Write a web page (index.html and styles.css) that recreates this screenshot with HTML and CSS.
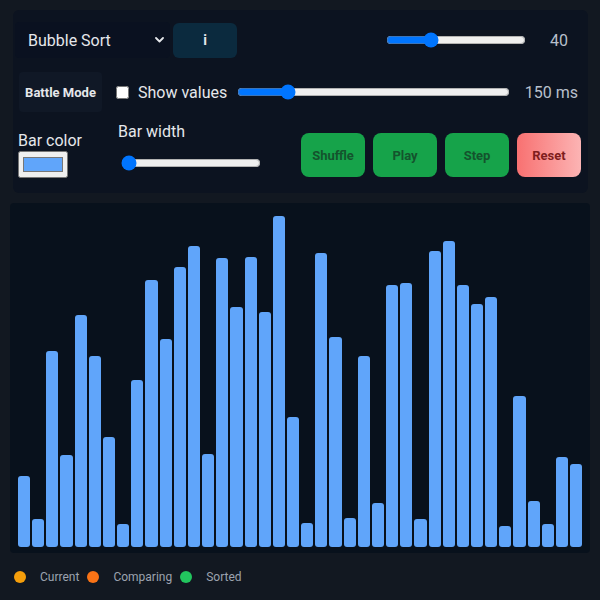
FILE: index.html
```html
<!DOCTYPE html>
<html>
<head>
<meta charset="utf-8">
<link rel="stylesheet" href="styles.css">
</head>
<body>
<div class="app">
  <div class="panel">
    <div class="row row1">
      <div class="select-wrap">
        <select class="algo"><option>Bubble Sort</option><option>Insertion Sort</option></select>
        <svg class="chev" width="9" height="6" viewBox="0 0 9 6"><path d="M1 1 L4.5 4.5 L8 1" fill="none" stroke="#e5e7eb" stroke-width="1.8" stroke-linecap="round" stroke-linejoin="round"/></svg>
      </div>
      <button class="btn-info">i</button>
      <div class="spacer"></div>
      <input class="range size-range" type="range" min="10" max="110" value="40">
      <span class="value v-size">40</span>
    </div>
    <div class="row row2">
      <button class="btn-battle">Battle Mode</button>
      <label class="check"><input type="checkbox"><span>Show values</span></label>
      <input class="range speed-range" type="range" min="20" max="800" value="150">
      <span class="value v-speed">150 ms</span>
    </div>
    <div class="row row3">
      <div class="field color-field">
        <span class="lbl">Bar color</span>
        <input type="color" value="#60a5fa">
      </div>
      <div class="field width-field">
        <span class="lbl">Bar width</span>
        <input class="range width-range" type="range" min="1" max="40" value="1">
      </div>
      <div class="spacer"></div>
      <div class="actions">
        <button class="act">Shuffle</button>
        <button class="act">Play</button>
        <button class="act">Step</button>
        <button class="act reset">Reset</button>
      </div>
    </div>
  </div>
  <div class="chart">
    <div class="bar" style="height:71px"></div>
    <div class="bar" style="height:28px"></div>
    <div class="bar" style="height:196px"></div>
    <div class="bar" style="height:92px"></div>
    <div class="bar" style="height:232px"></div>
    <div class="bar" style="height:191px"></div>
    <div class="bar" style="height:110px"></div>
    <div class="bar" style="height:23px"></div>
    <div class="bar" style="height:167px"></div>
    <div class="bar" style="height:267px"></div>
    <div class="bar" style="height:208px"></div>
    <div class="bar" style="height:280px"></div>
    <div class="bar" style="height:301px"></div>
    <div class="bar" style="height:93px"></div>
    <div class="bar" style="height:289px"></div>
    <div class="bar" style="height:240px"></div>
    <div class="bar" style="height:290px"></div>
    <div class="bar" style="height:235px"></div>
    <div class="bar" style="height:331px"></div>
    <div class="bar" style="height:130px"></div>
    <div class="bar" style="height:24px"></div>
    <div class="bar" style="height:294px"></div>
    <div class="bar" style="height:210px"></div>
    <div class="bar" style="height:29px"></div>
    <div class="bar" style="height:191px"></div>
    <div class="bar" style="height:44px"></div>
    <div class="bar" style="height:262px"></div>
    <div class="bar" style="height:264px"></div>
    <div class="bar" style="height:28px"></div>
    <div class="bar" style="height:296px"></div>
    <div class="bar" style="height:306px"></div>
    <div class="bar" style="height:262px"></div>
    <div class="bar" style="height:243px"></div>
    <div class="bar" style="height:250px"></div>
    <div class="bar" style="height:21px"></div>
    <div class="bar" style="height:151px"></div>
    <div class="bar" style="height:46px"></div>
    <div class="bar" style="height:23px"></div>
    <div class="bar" style="height:90px"></div>
    <div class="bar" style="height:83px"></div>
  </div>
  <div class="legend">
    <span class="dot current"></span><span class="ltxt">Current</span>
    <span class="dot comparing"></span><span class="ltxt">Comparing</span>
    <span class="dot sorted"></span><span class="ltxt">Sorted</span>
  </div>
</div>
</body>
</html>
```
FILE: styles.css
```css
* { box-sizing: border-box; }
html, body {
  margin: 0;
  background: #121821;
  font-family: Roboto, "Liberation Sans", sans-serif;
  color: #e5e7eb;
}
.app {
  padding: 10px 10px 0 10px;
  width: 600px;
  height: 600px;
}
.panel {
  margin: 0 2px 0 3px;
  background: #0c1320;
  border-radius: 6px;
  padding: 12px 0 0 0;
  height: 183px;
}
.row { display: flex; align-items: center; }
.spacer { flex: 1; }
.row1 { padding: 0 20px 0 2px; height: 36px; }
.select-wrap { position: relative; }
.algo {
  appearance: none;
  -webkit-appearance: none;
  width: 155px;
  height: 36px;
  background: #0a1120;
  color: #e5e7eb;
  border: none;
  border-radius: 4px;
  font-family: Roboto, "Liberation Sans", sans-serif;
  font-size: 16px;
  padding: 0 0 0 13px;
  outline: none;
}
.chev { position: absolute; left: 140px; top: 15px; }
.btn-info {
  margin-left: 3px;
  width: 64px;
  height: 35px;
  background: #0b2a3e;
  border: none;
  border-radius: 6px;
  color: #e5e7eb;
  font-family: Roboto, "Liberation Sans", sans-serif;
  font-weight: 700;
  font-size: 14px;
}
.range { margin: 0; }
.size-range { width: 140px; }
.value { color: #b8c0cc; font-size: 16px; }
.v-size { margin-left: 24px; }
.row2 { margin-top: 14px; padding: 0 10px 0 6px; height: 40px; }
.btn-battle {
  width: 83px;
  height: 40px;
  background: #101826;
  border: none;
  border-radius: 4px;
  color: #e5e7eb;
  font-family: Roboto, "Liberation Sans", sans-serif;
  font-weight: 700;
  font-size: 13px;
  padding: 0;
}
.check { display: flex; align-items: center; margin-left: 14px; font-size: 16px; }
.check input { margin: 0 9px 0 0; width: 13px; height: 13px; }
.speed-range { flex: 1; margin-left: 10px; }
.v-speed { margin-left: 15px; }
.row3 { margin-top: 8px; padding: 0 6px 0 5px; height: 64px; align-items: center; }
.field { display: flex; flex-direction: column; }
.lbl { font-size: 16px; color: #e5e7eb; }
.color-field { margin-top: 5px; }
.color-field input { margin: 1px 0 0 0; width: 50px; height: 27px; }
.width-field { margin-left: 36px; margin-top: -12px; }
.width-range { width: 140px; margin: 14px 0 0 3px; }
.actions { display: flex; gap: 8px; margin-right: 1px; margin-top: 6px; }
.act {
  width: 64px;
  height: 44px;
  border: none;
  border-radius: 8px;
  background: #16a34a;
  color: #14532d;
  font-family: Roboto, "Liberation Sans", sans-serif;
  font-weight: 700;
  font-size: 13px;
  padding: 0;
}
.act.reset {
  background: linear-gradient(90deg, #f87171, #fcb4b4);
  color: #7f1d1d;
}
.chart {
  margin-top: 10px;
  height: 350px;
  background: #08111c;
  border-radius: 4px;
  display: flex;
  align-items: flex-end;
  gap: 2px;
  padding: 0 8px 6px 8px;
}
.bar {
  flex: 1;
  background: #60a5fa;
  border-radius: 3px;
}
.legend {
  display: flex;
  align-items: center;
  margin-top: 17px;
  padding-left: 4px;
  font-size: 12px;
  color: #9ca3af;
}
.dot { width: 12px; height: 12px; border-radius: 50%; margin-right: 14px; }
.ltxt { margin-right: 8px; }
.current { background: #f59e0b; }
.comparing { background: #f97316; }
.sorted { background: #22c55e; }
```
